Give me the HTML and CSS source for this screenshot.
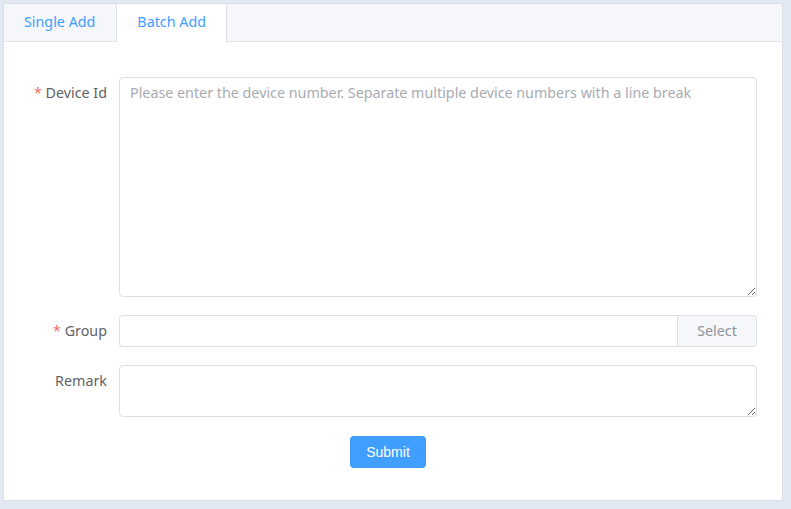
FILE: index.html
```html
<!DOCTYPE html>
<html>
<head>
<meta charset="utf-8">
<link rel="stylesheet" href="styles.css">
</head>
<body>
<div class="card">
  <div class="tabs">
    <div class="tab">Single Add</div>
    <div class="tab active">Batch Add</div>
  </div>
  <div class="content">
    <form class="form">
      <div class="item">
        <label class="label"><span class="req">*</span> Device Id</label>
        <textarea class="textarea big" placeholder="Please enter the device number. Separate multiple device numbers with a line break"></textarea>
      </div>
      <div class="item">
        <label class="label"><span class="req">*</span> Group</label>
        <div class="group">
          <input class="input" type="text">
          <div class="append">Select</div>
        </div>
      </div>
      <div class="item">
        <label class="label">Remark</label>
        <textarea class="textarea small"></textarea>
      </div>
      <div class="actions">
        <button type="button" class="btn">Submit</button>
      </div>
    </form>
  </div>
</div>
</body>
</html>
```
FILE: styles.css
```css
html, body {
  margin: 0;
  padding: 0;
  background: #e2e9f4;
}
body {
  padding: 3px 0 0 3px;
  font-family: "Noto Sans", "Open Sans", sans-serif;
  font-size: 14.3px;
}
.card {
  width: 778px;
  background: #fff;
  border: 1px solid #dcdfe6;
  box-sizing: content-box;
}
.tabs {
  display: flex;
  height: 37px;
  background: #f5f7fa;
  border-bottom: 1px solid #e4e7ed;
}
.tab {
  padding: 0 20px;
  height: 38px;
  line-height: 36px;
  color: #409eff;
  font-size: 14.3px;
  border-left: 1px solid transparent;
  border-right: 1px solid transparent;
  box-sizing: border-box;
}
.tab:first-child {
  border-left: none;
}
.tab.active {
  background: #fff;
  border-left-color: #dcdfe6;
  border-right-color: #dcdfe6;
}
.content {
  padding: 35px 25px 32px 15px;
}
.form {
  display: flex;
  flex-direction: column;
  gap: 18px;
}
.item {
  display: flex;
  align-items: flex-start;
}
.label {
  width: 100px;
  flex: none;
  text-align: right;
  padding-right: 12px;
  box-sizing: border-box;
  line-height: 32px;
  color: #606266;
}
.req {
  color: #f56c6c;
}
.textarea {
  flex: 1;
  display: block;
  margin: 0;
  border: 1px solid #dcdfe6;
  border-radius: 4px;
  padding: 4px 10px;
  font-family: inherit;
  font-size: 14.3px;
  line-height: 21px;
  color: #606266;
  box-sizing: border-box;
  outline: none;
}
.textarea::placeholder {
  color: #a8abb2;
}
.textarea.big {
  height: 220px;
}
.textarea.small {
  height: 52px;
}
.group {
  flex: 1;
  display: flex;
  height: 32px;
}
.input {
  flex: 1;
  margin: 0;
  border: 1px solid #dcdfe6;
  border-right: none;
  border-radius: 4px 0 0 4px;
  box-sizing: border-box;
  height: 32px;
  outline: none;
}
.append {
  width: 80px;
  box-sizing: border-box;
  border: 1px solid #dcdfe6;
  border-radius: 0 4px 4px 0;
  background: #f5f7fa;
  color: #909399;
  text-align: center;
  line-height: 30px;
}
.actions {
  display: flex;
  justify-content: center;
  margin-top: 1px;
}
.btn {
  width: 76px;
  height: 32px;
  border: none;
  border-radius: 4px;
  background: #409eff;
  color: #fff;
  font-family: "Liberation Sans", Arial, sans-serif;
  font-size: 14px;
  padding: 0;
}
```
